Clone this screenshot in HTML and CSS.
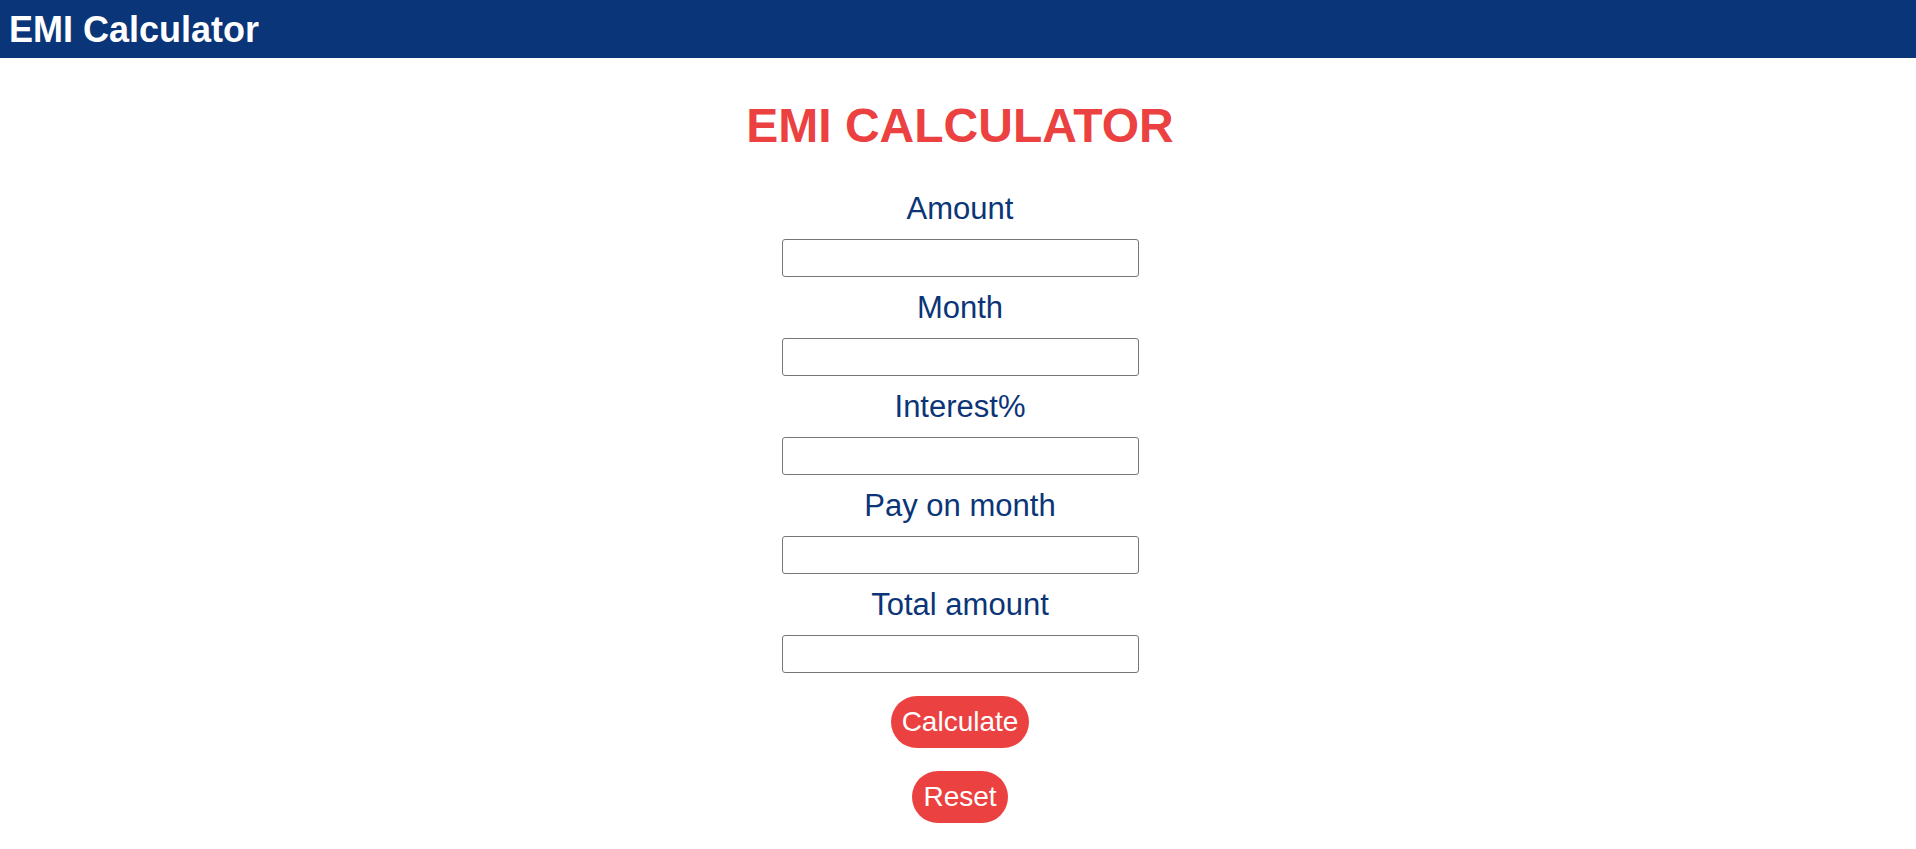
FILE: index.html
```html
<!DOCTYPE html>
<html lang="en">
<head>
<meta charset="utf-8">
<title>EMI Calculator</title>
<link rel="stylesheet" href="styles.css">
</head>
<body>
<header class="topbar">EMI Calculator</header>
<main class="main">
  <h1 class="title">EMI CALCULATOR</h1>
  <form class="form">
    <label class="label" for="amount">Amount</label>
    <input class="field" id="amount" type="text">
    <label class="label" for="month">Month</label>
    <input class="field" id="month" type="text">
    <label class="label" for="interest">Interest%</label>
    <input class="field" id="interest" type="text">
    <label class="label" for="pay">Pay on month</label>
    <input class="field" id="pay" type="text">
    <label class="label" for="total">Total amount</label>
    <input class="field" id="total" type="text">
    <div class="actions">
      <button type="button" class="btn">Calculate</button>
      <button type="reset" class="btn">Reset</button>
    </div>
  </form>
</main>
</body>
</html>
```
FILE: styles.css
```css
html, body {
  margin: 0;
  padding: 0;
  background: #ffffff;
  font-family: "Liberation Sans", Arial, sans-serif;
}

.topbar {
  box-sizing: border-box;
  height: 58px;
  padding: 9px 9px 0;
  background: #0a3578;
  color: #ffffff;
  font-size: 36px;
  line-height: 41px;
  font-weight: bold;
}

.main {
  display: flex;
  flex-direction: column;
  align-items: center;
  padding-top: 40px;
  padding-left: 4px;
}

.title {
  margin: 0 0 25px;
  font-size: 48px;
  line-height: 55px;
  font-weight: bold;
  color: #ec4141;
}

.form {
  display: flex;
  flex-direction: column;
  align-items: center;
}

.label {
  margin: 13px 0;
  font-size: 31px;
  line-height: 35px;
  color: #0b3577;
}

.field {
  box-sizing: border-box;
  width: 357px;
  height: 38px;
  margin: 0;
  padding: 2px 6px;
  border: 1px solid #767676;
  border-radius: 3px;
  background: #ffffff;
  font-family: inherit;
  font-size: 16px;
}

.actions {
  display: flex;
  flex-direction: column;
  align-items: center;
  gap: 23px;
  margin-top: 23px;
}

.btn {
  box-sizing: border-box;
  height: 52px;
  padding: 0 11px;
  border: none;
  border-radius: 26px;
  background: #ec4141;
  color: #ffffff;
  font-family: "Liberation Sans", Arial, sans-serif;
  font-size: 28px;
  line-height: 52px;
  cursor: pointer;
}
```
